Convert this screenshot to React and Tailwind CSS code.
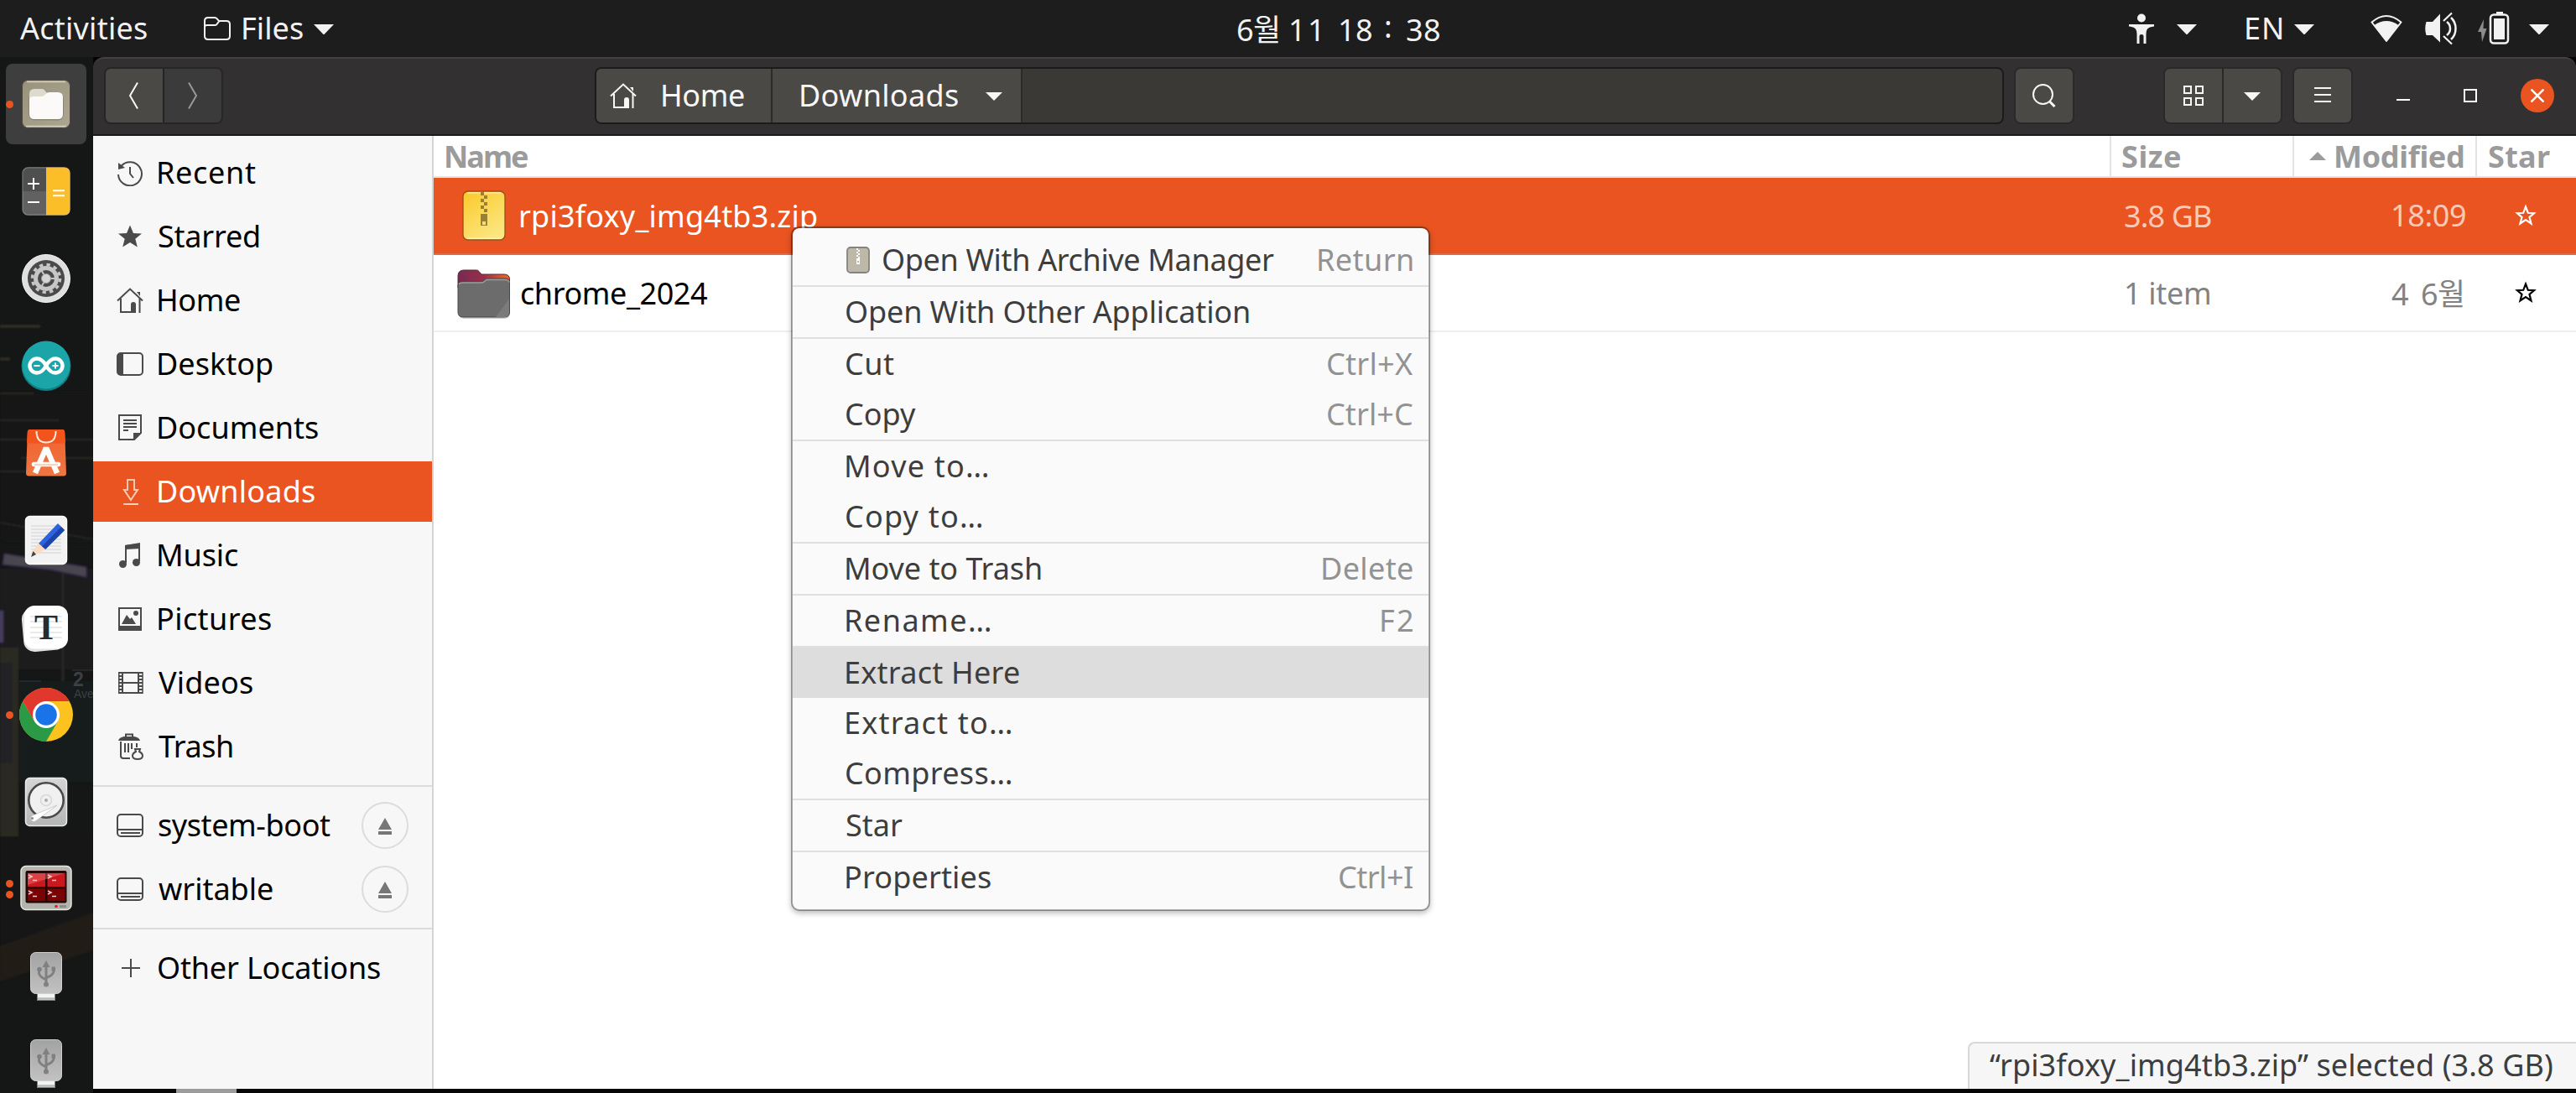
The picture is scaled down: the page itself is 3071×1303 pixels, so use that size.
import React, { useLayoutEffect, useRef, useState } from "react";

/* Text whose inked width is spread to exactly `w` pixels. */
function T({ w, className = "", children }) {
  const ref = useRef(null);
  const [fit, setFit] = useState({ letterSpacing: "0px", marginLeft: "0px" });
  useLayoutEffect(() => {
    const ctx = document.createElement("canvas").getContext("2d");
    const cs = getComputedStyle(ref.current);
    ctx.font = `${cs.fontWeight} ${cs.fontSize} ${cs.fontFamily}`;
    const m = ctx.measureText(children);
    const ink = m.actualBoundingBoxLeft + m.actualBoundingBoxRight;
    const n = Math.max(1, [...children].length - 1);
    setFit({
      letterSpacing: `${(w - ink) / n}px`,
      marginLeft: `${m.actualBoundingBoxLeft + 1}px`,
    });
  }, [w, children]);
  return (
    <span className={`block shrink-0 whitespace-pre ${className}`} style={{ width: w }}>
      <span ref={ref} className="inline-block" style={fit}>
        {children}
      </span>
    </span>
  );
}

function Caret({ className = "", small = false }) {
  return small ? (
    <svg viewBox="0 0 20 10" className={`h-[10px] w-[20px] shrink-0 ${className}`}>
      <path d="M0 0h20L10 10z" fill="currentColor" />
    </svg>
  ) : (
    <svg viewBox="0 0 24 12" className={`h-[12px] w-[24px] shrink-0 ${className}`}>
      <path d="M0 0h24L12 12.5z" fill="currentColor" />
    </svg>
  );
}

/* ---------- top bar ---------- */

function TopBar() {
  return (
    <header className="relative flex h-[68px] shrink-0 items-center bg-[#1d1d1d] text-[#f2f2f2]">
      <T w={151} className="ml-[23px]">Activities</T>
      <svg viewBox="0 0 32 28" className="ml-[69px] h-[28px] w-[32px] shrink-0" fill="none" stroke="currentColor" strokeWidth="2">
        <path d="M1 23V5q0-4 4-4h8q1.500 0 2.500 1.200L18 5h9q4 0 4 4v14q0 4-4 4H5q-4 0-4-4z" />
        <path d="M1 12q0-2 3-2h9q1.500 0 2.500-1.200L18.500 5" />
      </svg>
      <T w={71} className="ml-[14px]">Files</T>
      <Caret className="ml-[14px] mt-[2px]" />
      <div className="flex pt-[4px]">
        <T w={49} className="ml-[1076px]">6월</T>
        <T w={33} className="ml-[15px]">11</T>
        <T w={37} className="ml-[26px]">18</T>
        <T w={6} className="-mt-[4px] ml-[17px]">:</T>
        <T w={39} className="ml-[19px]">38</T>
      </div>
      <svg viewBox="0 0 30 36" className="ml-auto h-[36px] w-[30px] shrink-0" fill="currentColor">
        <circle cx="15" cy="5.500" r="5" />
        <path d="M0 13h30v2.500q-6 .5-8 3-1.500 2-1.500 6V36h-3V27q0-2-2.500-2t-2.500 2v9h-3V24.500q0-4-1.500-6-2-2.500-8-3z" />
      </svg>
      <Caret className="ml-[27px] mt-[2px]" />
      <T w={42} className="ml-[58px]">EN</T>
      <Caret className="ml-[16px] mt-[2px]" />
      <svg viewBox="0 0 38 34" className="ml-[67px] h-[34px] w-[38px] shrink-0" fill="none">
        <path d="M1.500 9.500Q18.900-5.500 36.500 9.500L19 32z" stroke="currentColor" strokeWidth="2" strokeLinejoin="round" />
        <path d="M4.500 13Q19 3 33.500 13L19 32z" fill="currentColor" />
      </svg>
      <svg viewBox="0 0 38 40" className="ml-[27px] h-[40px] w-[38px] shrink-0">
        <path d="M1.500 12H9l9-9.500v34L9 28H1.500Q-1 20 1.500 12z" fill="currentColor" />
        <g fill="none" stroke="currentColor" strokeWidth="2.200">
          <path d="M22 11 32 1.500M22 29l10 9.500" />
          <path d="M31 7q5.500 5 5.500 13T31 33" strokeWidth="2.500" />
          <path d="M26 12q4 3 4 8t-4 8" strokeWidth="2.500" />
        </g>
      </svg>
      <svg viewBox="0 0 38 40" className="ml-[25px] h-[40px] w-[38px] shrink-0">
        <path d="M7 9 0 24h4l1 12 5.500-16H6.500z" fill="#8c8c8c" />
        <rect x="15" y="3.500" width="21" height="34" rx="4" fill="none" stroke="currentColor" strokeWidth="2.500" />
        <rect x="22" y="0" width="8" height="3" fill="currentColor" />
        <rect x="19" y="8" width="13" height="25" fill="currentColor" />
      </svg>
      <Caret className="ml-[23px] mr-[32px] mt-[2px]" />
    </header>
  );
}

/* ---------- dock ---------- */

function FilesApp() {
  return (
    <>
      <rect x="3.500" y="3.500" width="57" height="57" rx="7" fill="url(#files)" stroke="#4b4740" />
      <path d="M9 5.500h46M8 58.500h48" stroke="#d5cfbc" strokeWidth="1.500" />
      <rect x="11" y="19" width="42" height="32.500" rx="7" fill="#8b8674" />
      <path d="M12 26v-6q0-6 6-6h9q2.500 0 3.500 2l2.500 3-3 7z" fill="#dedacd" />
      <path d="M12 27q0-4 5-4h9q3 0 4.500-2l1-1q1.500-2 4.500-2h10q6 0 6 6v20q0 6-6 6H18q-6 0-6-6z" fill="#fbfaf9" />
    </>
  );
}
function CalculatorApp() {
  return (
    <>
      <path d="M11 3.500h21V32H4V10.500q0-7 7-7z" fill="#4f4f4f" />
      <path d="M4 32h28v28.500H11q-7 0-7-7z" fill="#616161" />
      <path d="M32 3.500h21q7.500 0 7.500 7v43q0 7-7.500 7H32z" fill="#fbbd28" />
      <rect x="3.800" y="3.800" width="56.500" height="56.500" rx="7" fill="none" stroke="#c9c9c9" strokeOpacity=".35" strokeWidth="1.500" />
      <path d="M10 23h14M17 16v14M10 45h14M40 31.200h14M40 37.200h14" stroke="#fff" strokeWidth="2" />
    </>
  );
}
function SettingsApp() {
  return (
    <>
      <circle cx="32" cy="32" r="28.500" fill="#dfdfdf" stroke="#f3f3f3" />
      <circle cx="32" cy="32" r="22" fill="#4a4a4a" />
      <circle cx="32" cy="32" r="16.500" fill="none" stroke="#c6c6c6" strokeWidth="3.500" strokeDasharray="4.320" />
      <circle cx="32" cy="32" r="12.500" fill="none" stroke="#c6c6c6" strokeWidth="5" />
      <path d="M32 32h11M32 32l-5.500-9.500M32 32l-5.500 9.500" stroke="#c6c6c6" strokeWidth="2" />
      <circle cx="32" cy="32" r="5.500" fill="#d6d6d6" stroke="#9d9d9d" />
    </>
  );
}
function ArduinoApp() {
  return (
    <>
      <circle cx="32" cy="32.500" r="29.500" fill="#0e7f83" />
      <circle cx="32" cy="31" r="28.500" fill="#1ba5a8" />
      <path d="M32 32c-4-7-7-8.500-11-8.500a8.500 8.500 0 0 0 0 17c4 0 7-1.500 11-8.500s7-8.500 11-8.500a8.500 8.500 0 0 1 0 17c-4 0-7-1.500-11-8.500z" fill="none" stroke="#fff" strokeWidth="4.500" />
      <path d="M17.500 32h7M39.500 32h7M43 28.500v7" stroke="#fff" strokeWidth="2" />
    </>
  );
}
function SoftwareApp() {
  return (
    <>
      <path d="M13 4h38q3 0 3.200 3L56 56q0 3.500-3.500 3.500h-41Q8 59.500 8 56L9.800 7Q10 4 13 4z" fill="url(#bag)" />
      <path d="M13 4h38q3 0 3.200 3l.8 13.500H9L9.800 7Q10 4 13 4z" fill="#f2541b" />
      <path d="M20.500 6q0 13.500 11.500 13.500T43.500 6" fill="none" stroke="#ffe9df" strokeWidth="2" />
      <path d="M19 56 31 28h2l12 28" fill="none" stroke="#fff" strokeWidth="6.500" />
      <path d="M17.500 45.500h29" stroke="#fff" strokeWidth="5.500" strokeLinecap="round" />
      <path d="M18 46h28" stroke="#fbc2a9" strokeWidth="1.500" />
    </>
  );
}
function EditorApp() {
  return (
    <>
      <rect x="7.500" y="3.500" width="49" height="57" rx="5" fill="#f2f2f2" stroke="#fff" strokeWidth="1.500" />
      <path d="M14 15h36M14 19h36M14 23h36M14 27h36M14 31h36M14 35h36M14 39h36M14 43h36M14 47h36" stroke="#d2d2d2" />
      <path d="m46 12 8 8-23 23-8-7z" fill="#2d62e0" />
      <path d="m50 16 4 4-23 23-4-3.500z" fill="#1c43a8" />
      <path d="m23 36 8 7-13 7-4-2z" fill="#fbdcc0" />
      <path d="m16.500 45 3.500 4-6 3z" fill="#444" />
    </>
  );
}
function TyporaApp() {
  return (
    <>
      <rect x="4" y="8" width="50" height="52" rx="13" fill="#e2e2e2" transform="rotate(-5 29 34)" />
      <rect x="6" y="6" width="52" height="51.500" rx="12" fill="#fff" />
      <path d="M13 19h38M13 25h38M13 32h38M13 38h38M13 44h38" stroke="#eaeaea" strokeWidth="2" />
      <text x="32" y="45.500" textAnchor="middle" fontFamily="Liberation Serif, serif" fontWeight="700" fontSize="42" fill="#2b2b2b">T</text>
    </>
  );
}
function ChromeApp() {
  return (
    <>
      <circle cx="32" cy="32" r="32" fill="#fcc31e" />
      <path d="M32 32 18.150 40 4.290 16A32 32 0 0 0 32 64L45.900 40z" fill="#2a9a47" />
      <path d="M32 32 18.150 40 4.290 16A32 32 0 0 1 59.710 16H32z" fill="#e1372c" />
      <circle cx="32" cy="32" r="16" fill="#fff" />
      <circle cx="32" cy="32" r="12.800" fill="#1b73e8" />
    </>
  );
}
function DiskApp() {
  return (
    <>
      <rect x="7.500" y="3.500" width="49" height="57" rx="5" fill="url(#metal)" stroke="#ededed" strokeWidth="1.500" />
      <circle cx="32" cy="30" r="20.700" fill="#f0f0f0" stroke="#494949" strokeWidth="2.600" />
      <circle cx="32" cy="30" r="6.500" fill="none" stroke="#d8d8d8" strokeWidth="1.500" />
      <circle cx="32" cy="30" r="2" fill="#aaa" />
      <path d="m45 36-30 12.500q-3 3 0 6 3 2 5.500-.5z" fill="#fff" stroke="#bbb" strokeWidth=".7" />
      <circle cx="15.500" cy="51.500" r="1.500" fill="#888" />
    </>
  );
}
function TerminatorApp() {
  return (
    <>
      <rect x="2" y="4.500" width="60" height="52" rx="6" fill="#b4b4ae" stroke="#e6e6e2" strokeWidth="1.500" />
      <rect x="7.500" y="10" width="49" height="38.500" rx="2" fill="#2b0505" />
      <path d="M10 13h21v16H10zM33.500 13h21v16h-21z" fill="#c9191c" />
      <path d="M10 31.500h21V46H10zM33.500 31.500h21V46h-21z" fill="#790303" />
      <path d="M10 13h44L10 27z" fill="#ff8f8f" opacity=".35" />
      <g fill="none" stroke="#f5caca" strokeWidth="1.500">
        <path d="m11 15 4 2-4 2M16 21.500h5M34 15l4 2-4 2M39 21.500h5M11 34l4 2-4 2M16 40.500h5M34 34l4 2-4 2M39 40.500h5" />
      </g>
      <circle cx="44" cy="52.500" r="1.800" fill="#ee1c1c" />
      <path d="M48 52.500h8" stroke="#8d8d88" strokeWidth="3" />
    </>
  );
}
function UsbApp() {
  return (
    <>
      <rect x="21.500" y="51" width="21" height="9.500" fill="#f3f3f3" stroke="#7f7f7f" />
      <path d="M22 58.500h20" stroke="#b5bab5" strokeWidth="2.500" />
      <rect x="13.500" y="3.500" width="37" height="49" rx="6" fill="url(#usb)" stroke="#cfcfcf" />
      <g fill="none" stroke="#808080" strokeWidth="3">
        <path d="M32 19v23M23.500 25v3q0 4 8.500 8M41 25v1q0 4-9 8" />
      </g>
      <path d="m32 13 4.500 8h-9z" fill="#808080" />
      <circle cx="24" cy="23.500" r="2.800" fill="#808080" />
      <rect x="38.500" y="20.500" width="4.500" height="5" fill="#808080" />
      <circle cx="32" cy="41.500" r="3" fill="#808080" />
    </>
  );
}

const dockApps = [
  { Art: FilesApp, dots: 1, active: true },
  { Art: CalculatorApp },
  { Art: SettingsApp },
  { Art: ArduinoApp },
  { Art: SoftwareApp },
  { Art: EditorApp },
  { Art: TyporaApp },
  { Art: ChromeApp, dots: 1 },
  { Art: DiskApp },
  { Art: TerminatorApp, dots: 2 },
  { Art: UsbApp },
  { Art: UsbApp },
];

function Wallpaper() {
  return (
    <svg viewBox="0 0 111 1235" className="absolute inset-0 h-[1235px] w-[111px]">
      <defs>
        <linearGradient id="files" x2="1" y2="1"><stop stopColor="#98917c" /><stop offset="1" stopColor="#aca590" /></linearGradient>
        <linearGradient id="bag" x2="0" y2="1"><stop stopColor="#f0602e" /><stop offset="1" stopColor="#ee7743" /></linearGradient>
        <linearGradient id="metal" x2="0" y2="1"><stop stopColor="#d6d6d6" /><stop offset="1" stopColor="#b5b5b5" /></linearGradient>
        <linearGradient id="usb" x2="0" y2="1"><stop stopColor="#a2a2a2" /><stop offset="1" stopColor="#c2c2c2" /></linearGradient>
        <filter id="soft"><feGaussianBlur stdDeviation="1.200" /></filter>
      </defs>
      <rect width="111" height="1235" fill="#151616" />
      <g filter="url(#soft)">
        <path d="M0 400h111v180H0z" fill="#131414" />
        <path d="M0 321h48M0 360h12" stroke="#35322a" strokeWidth="3" />
        <path d="M0 401h40M0 433h70M0 456h111M25 478h86M0 494h30" stroke="#2b2a24" strokeWidth="2" />
        <path d="M0 555 111 575" stroke="#282823" strokeWidth="2" />
        <path d="M0 610h111v120H0z" fill="#1a1b1d" />
        <path d="m5 592 98 16v12L60 611 3 605z" fill="#48464d" stroke="#38294f" strokeWidth="1.500" />
        <path d="M0 660v38" stroke="#443a5c" strokeWidth="8" />
        <path d="M75 615v180" stroke="#28292b" strokeWidth="3" />
        <path d="M0 704h22v225H0z" fill="#2c2924" />
        <path d="M0 722h15v120H0z" fill="#202327" />
        <path d="M23 744h88v120H23z" fill="#191b1f" />
        <path d="M0 929h111v90L0 1060z" fill="#171614" />
        <path d="M0 1060 111 1020v45L0 1102z" fill="#211e19" />
      </g>
      <path d="M23 744h26M86 731h25" stroke="#33353a" />
      <text x="87" y="750" fontFamily="Liberation Sans, sans-serif" fontWeight="700" fontSize="23" fill="#3d3f42">2</text>
      <text x="88" y="764" fontFamily="Liberation Sans, sans-serif" fontSize="14" fill="#3d3f42">Ave</text>
    </svg>
  );
}

function Dock() {
  return (
    <nav className="relative h-[1235px] w-[111px] shrink-0 overflow-hidden">
      <Wallpaper />
      <div className="relative flex w-[110px] flex-col pt-[4px]">
        {dockApps.map(({ Art, dots = 0, active }, i) => (
          <div key={i} className="relative flex h-[104px] shrink-0 items-center justify-center">
            {active && <div className="absolute left-[7px] top-[4px] h-[96px] w-[96px] rounded-[8px] bg-[#3e3e3e]" />}
            <div className="absolute left-[7px] flex h-full flex-col justify-center gap-[4px]">
              {Array.from({ length: dots }, (_, d) => (
                <span key={d} className="h-[9px] w-[9px] rounded-full bg-[#e95420]" />
              ))}
            </div>
            <svg viewBox="0 0 64 64" className="relative h-[64px] w-[64px]">
              <Art />
            </svg>
          </div>
        ))}
      </div>
    </nav>
  );
}

/* ---------- window header ---------- */

function HouseIcon({ className = "" }) {
  return (
    <svg viewBox="0 0 32 32" className={`h-[32px] w-[32px] shrink-0 ${className}`} fill="none" stroke="currentColor" strokeWidth="2">
      <path d="M1 16.500 16 2.500l15 14" />
      <path d="M5 14v16h18M27.500 14v17" />
      <path d="M17 31V21q0-3 3-3t3 3v10z" fill="currentColor" stroke="none" />
      <path d="M24 6h4v5z" fill="currentColor" stroke="none" />
    </svg>
  );
}

function WindowHeader() {
  return (
    <div className="flex h-[94px] shrink-0 items-start rounded-t-[13px] border-b-2 border-t-2 border-b-[#1b1a1b] border-t-[#434243] bg-[#323031] pt-[10px] text-[#f7f7f7]">
      <div className="ml-[13px] flex h-[68px] w-[142px] shrink-0 overflow-hidden rounded-[8px] border-2 border-[#272626]">
        <div className="flex w-[68px] items-center justify-center bg-[#4a4946]">
          <svg viewBox="0 0 12 32" className="ml-[-2px] h-[32px] w-[12px]" fill="none" stroke="currentColor" strokeWidth="2"><path d="M11 .5 2 16l9 15.500" /></svg>
        </div>
        <div className="flex flex-1 items-center justify-center border-l-2 border-[#232323] bg-[#3b3b3b] text-[#989898]">
          <svg viewBox="0 0 12 32" className="h-[32px] w-[12px]" fill="none" stroke="currentColor" strokeWidth="2"><path d="M1 .5 10 16 1 31.500" /></svg>
        </div>
      </div>
      <div className="ml-[443px] flex h-[68px] w-[1680px] shrink-0 overflow-hidden rounded-[8px] border-2 border-[#1c1b1c] bg-[#3a3936]">
        <div className="flex w-[208px] items-center bg-[#4a4946]">
          <HouseIcon className="ml-[16px]" />
          <T w={97} className="ml-[30px]">Home</T>
        </div>
        <div className="flex w-[300px] items-center border-l-2 border-r-2 border-[#2a2a29] bg-[#4a4946]">
          <T w={187} className="ml-[33px]">Downloads</T>
          <Caret small className="ml-[34px] mt-[2px]" />
        </div>
      </div>
      <div className="ml-[12px] flex h-[68px] w-[72px] shrink-0 items-center justify-center rounded-[8px] border-2 border-[#2a2829] bg-[#4a4946]">
        <svg viewBox="0 0 28 28" className="h-[28px] w-[28px]" fill="none" stroke="currentColor" strokeWidth="2"><circle cx="12.500" cy="12.500" r="11.500" /><path d="m20.500 21 6 6" strokeWidth="3" /></svg>
      </div>
      <div className="ml-[106px] flex h-[68px] w-[142px] shrink-0 overflow-hidden rounded-[8px] border-2 border-[#2a2829] bg-[#4a4946]">
        <div className="flex w-[68px] items-center justify-center">
          <svg viewBox="0 0 24 24" className="h-[24px] w-[24px]" fill="none" stroke="currentColor" strokeWidth="2"><path d="M1 1h8v8H1zM15 1h8v8h-8zM1 15h8v8H1zM15 15h8v8h-8z" /></svg>
        </div>
        <div className="flex flex-1 items-center justify-center border-l-2 border-[#2a2829]"><Caret small className="mt-[2px]" /></div>
      </div>
      <div className="ml-[12px] flex h-[68px] w-[72px] shrink-0 items-center justify-center rounded-[8px] border-2 border-[#2a2829] bg-[#4a4946]">
        <svg viewBox="0 0 20 18" className="-mt-[2px] h-[18px] w-[20px]" stroke="currentColor" strokeWidth="2"><path d="M0 1h20M0 9h20M0 17h20" /></svg>
      </div>
      <div className="ml-[52px] mt-[38px] h-[2px] w-[16px] bg-white" />
      <div className="ml-[64px] mt-[26px] h-[16px] w-[16px] border-2 border-white" />
      <div className="ml-[52px] mt-[14px] flex h-[40px] w-[40px] items-center justify-center rounded-full bg-[#e95420]">
        <svg viewBox="0 0 16 16" className="h-[16px] w-[16px]" stroke="#fff" strokeWidth="2.500"><path d="m.5.5 15 15M15.500.5l-15 15" /></svg>
      </div>
    </div>
  );
}

/* ---------- sidebar ---------- */

const starPath = "M16 2.500l4 9.500 10 .500-7.700 6.300 2.500 9.700-8.800-5.600L7.200 28.500l2.500-9.700L2 12.500l10-.500z";

const placeIcons = {
  recent: (
    <>
      <path d="M5.500 8A14 14 0 1 1 2 18M16 9v8l4 5" />
      <path d="M2 4v8l8-2z" fill="currentColor" stroke="none" />
    </>
  ),
  starred: <path d={starPath} fill="currentColor" stroke="none" />,
  desktop: (
    <>
      <rect x="1" y="3" width="30" height="26" rx="4" />
      <path d="M1 7q0-4 4-4h3v26H5q-4 0-4-4z" fill="currentColor" stroke="none" />
    </>
  ),
  documents: (
    <>
      <path d="M3 1h26v21l-8 8H3zM8 7h16M8 11h16M8 15h16M8 19h6" />
      <path d="M20 31v-9h9z" fill="currentColor" stroke="none" />
    </>
  ),
  downloads: <path d="M13 2h8v12h4l-8 12-8-12h4zM8 31h18" />,
  music: (
    <>
      <path d="M11 25V5l16-2v20" />
      <path d="M10 4l18-3v7L10 9z" fill="currentColor" stroke="none" />
      <circle cx="7.500" cy="26.500" r="4.500" fill="currentColor" stroke="none" />
      <circle cx="23.500" cy="24.500" r="4.500" fill="currentColor" stroke="none" />
    </>
  ),
  pictures: (
    <>
      <path d="M3 3h26v26H3z" />
      <path d="M2 24h28v6H2zM6 22l6-11 4 5 2-2 5 8z" fill="currentColor" stroke="none" />
      <circle cx="23" cy="9" r="3" fill="currentColor" stroke="none" />
    </>
  ),
  videos: (
    <>
      <path d="M7 4h19v24H7zM7 16h19" />
      <path d="M4 3v26M29 3v26" strokeWidth="4" strokeDasharray="2" />
      <path d="M2.800 3v26M31 3v26" strokeWidth="1.500" />
    </>
  ),
  trash: (
    <>
      <path d="M5 10v17q0 3 3 3h8M10 12v11M14 12v11M18 12v7M24 12v5M11 4V1.500h8V4" />
      <path d="M2 9q1-4 7-5h12q6 1 7 5z" fill="currentColor" stroke="none" />
      <path d="M22 19h6l-1 3q4 2 4 5 0 4-6 4t-6-4q0-3 4-5z" />
    </>
  ),
  drive: (
    <>
      <rect x="1" y="3" width="30" height="26" rx="4" />
      <path d="M1 21h30M5 25h23" />
    </>
  ),
  plus: <path d="M17 5v22M6 16h22" />,
};

function Place({ icon, label, w, selected, eject }) {
  return (
    <div className={`flex h-[72px] shrink-0 items-center ${selected ? "bg-[#e95420] text-white" : "text-black"}`}>
      <div className={`ml-[28px] mr-[17px] ${selected ? "text-[#f9cbb9]" : "text-[#4a4a4a]"}`}>
        {icon === "home" ? (
          <HouseIcon />
        ) : (
          <svg viewBox="0 0 32 32" className="h-[32px] w-[32px]" fill="none" stroke="currentColor" strokeWidth="2">
            {placeIcons[icon]}
          </svg>
        )}
      </div>
      <T w={w}>{label}</T>
      {eject && (
        <div className="ml-auto mr-[28px] flex h-[56px] w-[56px] items-center justify-center rounded-full border-2 border-[#dcdcdc]">
          <svg viewBox="0 0 16 20" className="mt-[1px] h-[20px] w-[16px]" fill="#777"><path d="M8 0l8 14H0zM0 16h16v4H0z" /></svg>
        </div>
      )}
    </div>
  );
}

function Sidebar() {
  return (
    <aside className="flex w-[406px] shrink-0 flex-col gap-[4px] border-r-2 border-[#d5d5d5] bg-[#f7f7f7] pt-[8px]">
      <Place icon="recent" label="Recent" w={116} />
      <Place icon="starred" label="Starred" w={120} />
      <Place icon="home" label="Home" w={97} />
      <Place icon="desktop" label="Desktop" w={136} />
      <Place icon="documents" label="Documents" w={190} />
      <Place icon="downloads" label="Downloads" w={186} selected />
      <Place icon="music" label="Music" w={95} />
      <Place icon="pictures" label="Pictures" w={134} />
      <Place icon="videos" label="Videos" w={112} />
      <Place icon="trash" label="Trash" w={88} />
      <div className="my-[6px] h-[2px] shrink-0 bg-[#dbdbdb]" />
      <Place icon="drive" label="system-boot" w={205} eject />
      <Place icon="drive" label="writable" w={136} eject />
      <div className="my-[6px] h-[2px] shrink-0 bg-[#dbdbdb]" />
      <Place icon="plus" label="Other Locations" w={264} />
    </aside>
  );
}

/* ---------- file list ---------- */

function ZipIcon() {
  return (
    <svg viewBox="0 0 64 64" className="h-[64px] w-[64px] shrink-0">
      <defs><linearGradient id="zip" x2=".6" y2="1"><stop stopColor="#fbc928" /><stop offset="1" stopColor="#fce680" /></linearGradient></defs>
      <rect x="7" y="3" width="50" height="58" rx="6" fill="url(#zip)" stroke="#9a4f16" strokeWidth="1.300" />
      <path d="M12 4.700h40M12 59.300h40" stroke="#fff3b0" strokeWidth="1.500" />
      <path d="M28 4h4v4h-4zM32 8h4v4h-4zM28 12h4v4h-4zM32 16h4v4h-4zM28 20h4v4h-4zM32 24h4v4h-4zM28 30h8v14h-8zM30 39v4h4v-4z" fill="#99803a" fillRule="evenodd" />
    </svg>
  );
}
function FolderIcon() {
  return (
    <svg viewBox="0 0 64 64" className="h-[64px] w-[64px] shrink-0">
      <defs><linearGradient id="tab" x2="1"><stop stopColor="#772953" /><stop offset=".5" stopColor="#97304a" /><stop offset=".9" stopColor="#e0602c" /></linearGradient></defs>
      <rect x="2" y="10" width="61" height="51" rx="6" fill="#000" opacity=".18" />
      <path d="M1 10q0-7 7-7h15q2 0 3 1.500L29 8h27q6.500 0 6.500 6v10H1z" fill="url(#tab)" stroke="#5c2a34" />
      <path d="M1 22q0-5 5-5h22q2 0 3-1l3-2.500q1-.5 3-.5h20q5.500 0 5.500 5v35q0 6-6 6H7q-6 0-6-6z" fill="#6c6c6c" stroke="#4d4548" />
      <path d="M2 20q1-2 5-2h22q2 0 3-1l3-2.500h22q4 0 5 3" fill="none" stroke="#9a9a9a" strokeWidth="1.500" />
      <path d="M62 37v16q0 6-6 6H46z" fill="#7b7b7b" />
    </svg>
  );
}
function StarOutline() {
  return (
    <svg viewBox="0 0 28 28" className="ml-[59px] h-[28px] w-[28px] shrink-0" fill="none" stroke="currentColor" strokeWidth="2.200">
      <path d="M14 3.500 16.800 10.800 24 11.200 18.500 15.800 20.500 23.500 14 19 7.500 23.500 9.500 15.800 4 11.200 11.200 10.800z" />
    </svg>
  );
}

function FileList() {
  return (
    <main className="flex min-w-0 flex-1 flex-col bg-white">
      <div className="flex h-[50px] shrink-0 items-stretch border-b-2 border-[#e4e4e4] font-bold leading-[49px] text-[#9b9b9b]">
        <div className="flex-1 pl-[14px]"><T w={97}>Name</T></div>
        <div className="w-[218px] border-l-2 border-[#e4e4e4] pl-[12px]"><T w={69}>Size</T></div>
        <div className="flex w-[218px] items-center justify-end border-l-2 border-[#e4e4e4] pr-[15px]">
          <Caret small className="mr-[11px] rotate-180" />
          <T w={152}>Modified</T>
        </div>
        <div className="w-[120px] border-l-2 border-[#e4e4e4] pl-[13px]"><T w={73}>Star</T></div>
      </div>
      <div className="flex h-[92px] shrink-0 items-center border-b-2 border-[#dd6c46] bg-[#e95420] text-[#f9c9b8]">
        <div className="ml-[28px]"><ZipIcon /></div>
        <T w={353} className="ml-[11px] pt-[2px] text-white">rpi3foxy_img4tb3.zip</T>
        <T w={103} className="ml-auto pt-[2px]">3.8 GB</T>
        <T w={86} className="ml-[217px]">18:09</T>
        <div className="mr-[46px] text-white"><StarOutline /></div>
      </div>
      <div className="flex h-[92px] shrink-0 items-center border-b-2 border-[#efefef] text-[#828282]">
        <div className="ml-[28px] pt-[4px]"><FolderIcon /></div>
        <T w={222} className="ml-[11px] pt-[2px] text-black">chrome_2024</T>
        <T w={99} className="ml-auto pt-[2px]">1 item</T>
        <T w={18} className="ml-[217px] pt-[4px]">4</T>
        <T w={49} className="ml-[18px] mr-[3px] pt-[4px]">6월</T>
        <div className="mr-[46px] text-black"><StarOutline /></div>
      </div>
    </main>
  );
}

/* ---------- context menu ---------- */

const menu = [
  [{ label: "Open With Archive Manager", w: 466, icon: true, accel: "Return", aw: 112 }],
  [{ label: "Open With Other Application", w: 480 }],
  [
    { label: "Cut", w: 57, accel: "Ctrl+X", aw: 101 },
    { label: "Copy", w: 83, accel: "Ctrl+C", aw: 101 },
  ],
  [{ label: "Move to…", w: 168 }, { label: "Copy to…", w: 161 }],
  [{ label: "Move to Trash", w: 232, accel: "Delete", aw: 107 }],
  [{ label: "Rename…", w: 171, accel: "F2", aw: 37 }],
  [
    { label: "Extract Here", w: 206, hover: true },
    { label: "Extract to…", w: 196 },
    { label: "Compress…", w: 196 },
  ],
  [{ label: "Star", w: 67 }],
  [{ label: "Properties", w: 172, accel: "Ctrl+I", aw: 87 }],
];

function ContextMenu() {
  return (
    <div className="absolute left-[943px] top-[270px] w-[762px] rounded-[10px] border-2 border-black/35 bg-[#fafafa] bg-clip-padding pb-[8px] pt-[8px] text-[#3d3d3d] shadow-[0_3px_6px_rgba(0,0,0,0.25)]">
      {menu.map((group, g) => (
        <div key={g} className={g ? "border-t-2 border-[#dfdfdf]" : ""}>
          {group.map((item) => (
            <div key={item.label} className={`flex h-[60px] items-center pl-[63px] pr-[20px] ${item.hover ? "bg-[#dddddd]" : ""}`}>
              {item.icon && (
                <svg viewBox="0 0 28 32" className="ml-[1px] mr-[15px] h-[32px] w-[28px] shrink-0">
                  <rect x="1" y="1" width="26" height="30" rx="4" fill="#bdb8a8" stroke="#84847e" strokeWidth="1.800" />
                  <path d="M12 2h2v2h-2zM14 4h2v2h-2zM12 6h2v2h-2zM14 8h2v2h-2zM12 10h2v2h-2zM14 12h2v2h-2zM12 14h4v7h-4zM13 17v2h2v-2z" fill="#fff" fillRule="evenodd" />
                </svg>
              )}
              <T w={item.w}>{item.label}</T>
              {item.accel && <T w={item.aw} className="ml-auto text-[#929292]">{item.accel}</T>}
            </div>
          ))}
        </div>
      ))}
    </div>
  );
}

export default function App() {
  return (
    <div className="relative flex h-[1303px] w-[3071px] flex-col overflow-hidden bg-[#050506] font-['Noto_Sans','Noto_Sans_CJK_KR',sans-serif] text-[36px] leading-[48px]">
      <TopBar />
      <div className="flex min-h-0 flex-1">
        <Dock />
        <div className="flex min-w-0 flex-1 flex-col">
          <WindowHeader />
          <div className="flex h-[1136px] shrink-0">
            <Sidebar />
            <FileList />
          </div>
          <div className="ml-[99px] h-[5px] w-[72px] bg-[#9c9c9c]" />
        </div>
      </div>
      <div className="absolute left-[2346px] top-[1242px] h-[56px] w-[725px] rounded-tl-[8px] border-l-2 border-t-2 border-[#d8d8d8] bg-[#f6f6f6] pl-[23px] pt-[2px] text-[#3d3d3d]">
        <T w={671}>“rpi3foxy_img4tb3.zip” selected (3.8 GB)</T>
      </div>
      <ContextMenu />
    </div>
  );
}
